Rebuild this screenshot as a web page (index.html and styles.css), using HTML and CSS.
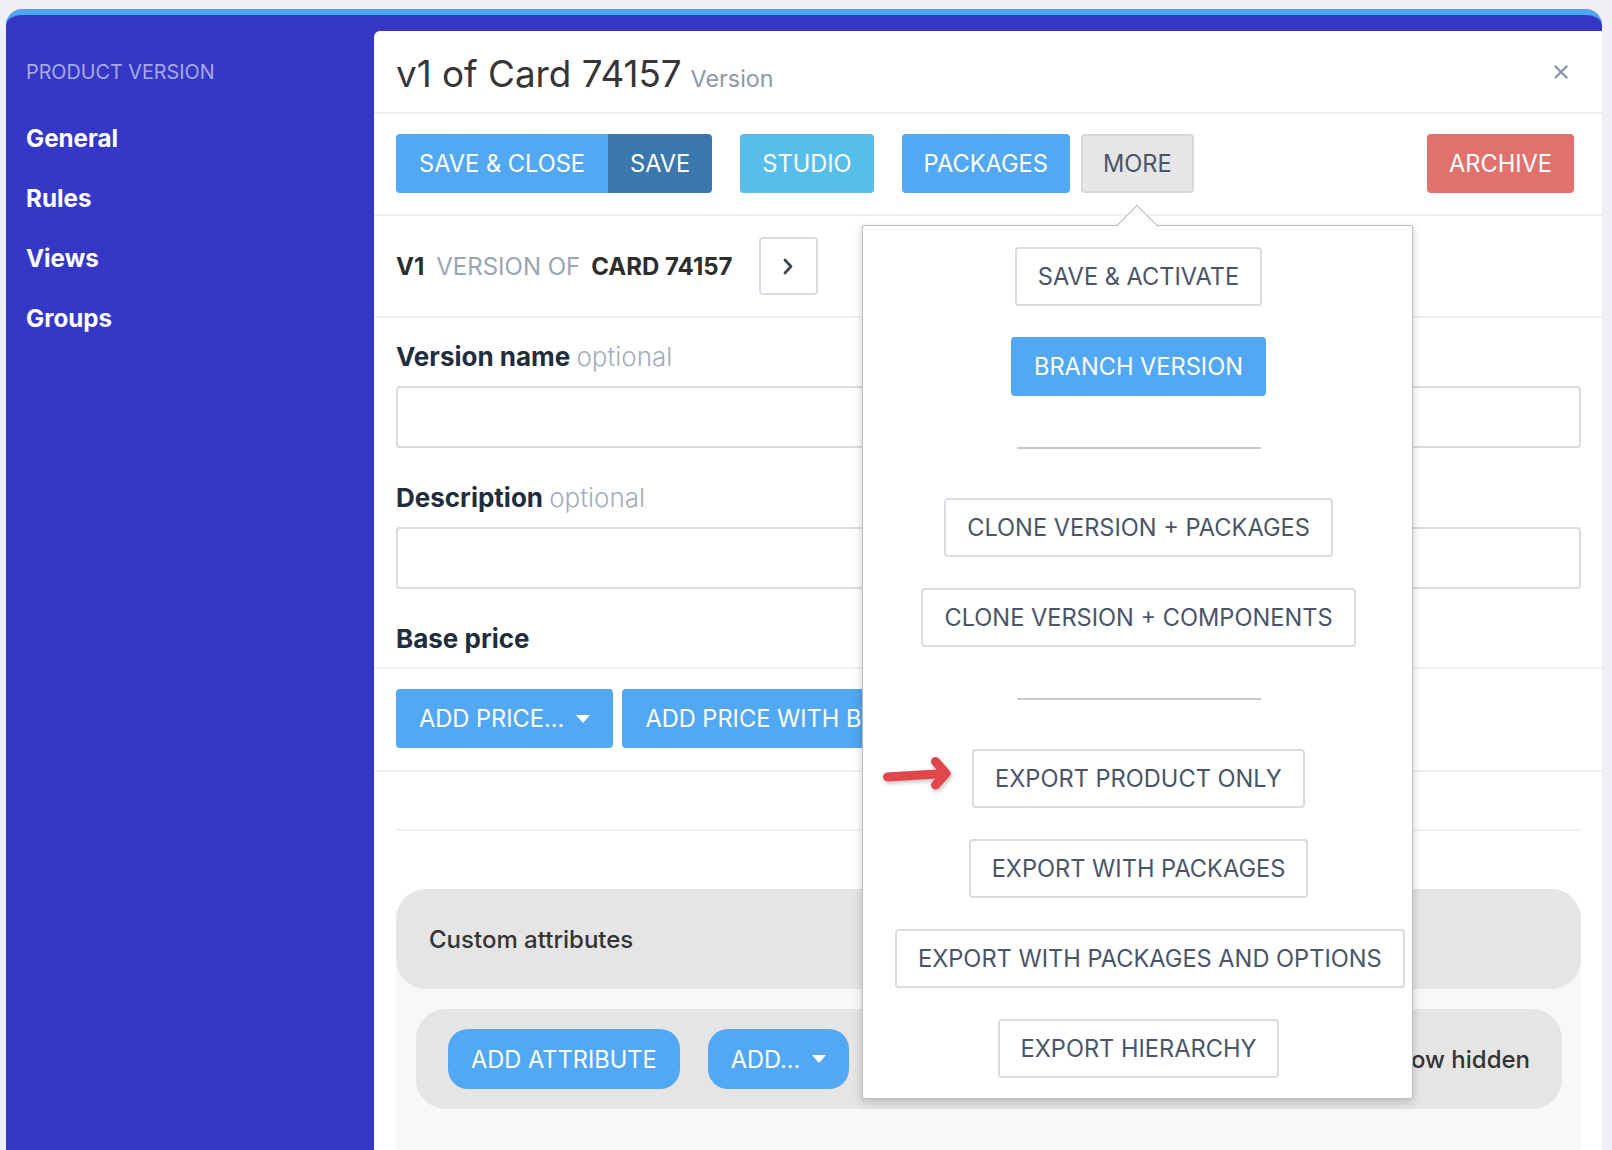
FILE: index.html
```html
<!DOCTYPE html>
<html lang="en">
<head>
    <meta charset="UTF-8">
    <meta name="viewport" content="width=device-width, initial-scale=1.0">
    <title>v1 of Card 74157 - Product version</title>
    <link rel="stylesheet" href="styles.css">
</head>
<body>

<div class="frame">
    <aside class="sidebar">
        <div class="sidebar-title">PRODUCT VERSION</div>
        <nav class="side-nav">
            <a href="#">General</a>
            <a href="#">Rules</a>
            <a href="#">Views</a>
            <a href="#">Groups</a>
        </nav>
    </aside>

    <main class="card">
        <header class="card-head">
            <h1>v1 of Card 74157<small>Version</small></h1>
            <button class="close" type="button" aria-label="Close">
                <svg width="14" height="14" viewBox="0 0 14 14"><path d="M1.5 1.5L12.5 12.5M12.5 1.5L1.5 12.5" stroke="#8b95a5" stroke-width="2.4" stroke-linecap="round"/></svg>
            </button>
        </header>

        <div class="toolbar">
            <div class="btn-group">
                <button class="btn btn-blue" type="button">SAVE &amp; CLOSE</button>
                <button class="btn btn-dark" type="button">SAVE</button>
            </div>
            <button class="btn btn-cyan" type="button">STUDIO</button>
            <button class="btn btn-blue" type="button">PACKAGES</button>
            <button class="btn btn-grey more" type="button">MORE</button>
            <button class="btn btn-red archive" type="button">ARCHIVE</button>
        </div>

        <div class="version-row">
            <b>V1</b>
            <span class="muted">VERSION OF</span>
            <b>CARD 74157</b>
            <button class="chevron" type="button" aria-label="Next">
                <svg width="12" height="19" viewBox="0 0 12 19"><path d="M3 3L9 9.5L3 16" fill="none" stroke="#3d4a5c" stroke-width="2.8" stroke-linecap="round" stroke-linejoin="round"/></svg>
            </button>
        </div>

        <div class="form">
            <label class="field-label" for="vname">Version name <span>optional</span></label>
            <input class="field-input" type="text" id="vname">

            <label class="field-label" for="vdesc">Description <span>optional</span></label>
            <input class="field-input" type="text" id="vdesc">

            <div class="field-label last">Base price</div>
        </div>

        <div class="price-row">
            <button class="btn btn-blue" type="button">ADD PRICE... <i class="caret"></i></button>
            <button class="btn btn-blue" type="button">ADD PRICE WITH BREAKS</button>
        </div>

        <div class="attrs-wrap">
            <hr>
            <div class="attrs">
                <div class="attrs-head">Custom attributes</div>
                <div class="attrs-bar">
                    <button class="btn btn-blue pill" type="button">ADD ATTRIBUTE</button>
                    <button class="btn btn-blue pill" type="button">ADD... <i class="caret"></i></button>
                    <span class="show-hidden">Show hidden</span>
                </div>
            </div>
        </div>

        <!-- menu of the MORE button -->
        <div class="popover">
            <div class="pop-row"><button class="btn btn-outline" type="button">SAVE &amp; ACTIVATE</button></div>
            <div class="pop-row"><button class="btn btn-blue" type="button">BRANCH VERSION</button></div>
            <div class="pop-divider"></div>
            <div class="pop-row"><button class="btn btn-outline" type="button">CLONE VERSION + PACKAGES</button></div>
            <div class="pop-row"><button class="btn btn-outline" type="button">CLONE VERSION + COMPONENTS</button></div>
            <div class="pop-divider"></div>
            <div class="pop-row"><button class="btn btn-outline" type="button">EXPORT PRODUCT ONLY</button></div>
            <div class="pop-row"><button class="btn btn-outline" type="button">EXPORT WITH PACKAGES</button></div>
            <div class="pop-row"><button class="btn btn-outline" type="button">EXPORT WITH PACKAGES AND OPTIONS</button></div>
            <div class="pop-row"><button class="btn btn-outline" type="button">EXPORT HIERARCHY</button></div>

            <svg class="pointer" width="85" height="50" viewBox="0 0 85 50">
                <path d="M12.5 27L70 23.5M60.5 11.5L71 23.5L60.5 35" fill="none" stroke="#e0464b" stroke-width="9" stroke-linecap="round" stroke-linejoin="round"/>
            </svg>
        </div>
    </main>
</div>

</body>
</html>
```

FILE: styles.css
```css
* {
    box-sizing: border-box;
}
html, body {
    height: 100%;
}
body {
    margin: 0;
    padding: 9px 10px 0 6px;
    background-color: #eef0f5;
    font-family: Inter, "Noto Sans", sans-serif;
    overflow: hidden;
}
.frame {
    display: flex;
    height: 100%;
    background-color: #3538c6;
    border-top: 6px solid #4fa5f0;
    border-radius: 16px 16px 0 0;
}

/* sidebar */
.sidebar {
    width: 368px;
    flex: none;
    padding: 45px 20px 0;
}
.sidebar-title {
    font-size: 19.8px;
    line-height: 24px;
    color: #a7aae4;
}
.side-nav {
    margin-top: 25px;
}
.side-nav a {
    display: block;
    color: #fff;
    font-size: 24.2px;
    font-weight: 700;
    line-height: 60px;
    text-decoration: none;
}

/* main card */
.card {
    flex: 1;
    position: relative;
    margin-top: 16px;
    background-color: #fff;
    border-radius: 6px 0 0 0;
    overflow: hidden;
}
.card-head {
    display: flex;
    align-items: flex-start;
    justify-content: space-between;
    height: 83px;
    padding: 21px 22px 0;
    border-bottom: 2px solid #eff0f2;
}
.card-head h1 {
    margin: 0;
    font-size: 36.8px;
    font-weight: 400;
    line-height: 44px;
    color: #363636;
}
.card-head h1 small {
    margin-left: 9px;
    font-size: 23.3px;
    color: #8d98a8;
}
.close {
    margin: 13px 12px 0 0;
    padding: 0;
    border: none;
    background: none;
    line-height: 0;
    cursor: pointer;
}

/* buttons */
.btn {
    display: inline-flex;
    align-items: center;
    height: 59px;
    padding: 0 22px;
    font-family: inherit;
    font-size: 23.6px;
    color: #fff;
    white-space: nowrap;
    border: 1px solid transparent;
    border-radius: 4px;
    cursor: pointer;
}
.btn-blue { background-color: #52a8f2; }
.btn-dark { background-color: #3977ad; }
.btn-cyan { background-color: #57bde9; }
.btn-red { background-color: #e0716c; }
.btn-grey {
    background-color: #e6e6e6;
    border: 2px solid #d5d9df;
    color: #4a5568;
    padding: 0 21px;
}
.btn-outline {
    background-color: #fff;
    border: 2px solid #d9dde3;
    color: #4a5568;
    padding: 0 21px;
}
.btn-group {
    display: flex;
}
.btn-group .btn:first-child {
    border-radius: 4px 0 0 4px;
}
.btn-group .btn:last-child {
    border-radius: 0 4px 4px 0;
}
.caret {
    width: 0;
    height: 0;
    margin-left: 12px;
    border-left: 7.5px solid transparent;
    border-right: 7.5px solid transparent;
    border-top: 8px solid #fff;
}

.toolbar {
    display: flex;
    align-items: center;
    gap: 28px;
    padding: 20px 28px 21px 22px;
    border-bottom: 2px solid #eff0f2;
}
.toolbar .btn {
    padding: 0 21px;
}
.toolbar .btn-group .btn:first-child {
    padding: 0 22px;
}
.toolbar .btn-grey {
    padding: 0 20px;
}
.toolbar .more {
    margin-left: -17px;
}
.toolbar .archive {
    margin-left: auto;
}

/* version line */
.version-row {
    display: flex;
    align-items: center;
    padding: 21px 22px;
    border-bottom: 2px solid #eff0f2;
    font-size: 24px;
    color: #2d2d2d;
}
.version-row .muted {
    margin: 0 11px 0 12px;
    color: #9aa5b4;
}
.chevron {
    display: flex;
    align-items: center;
    justify-content: center;
    width: 59px;
    height: 58px;
    margin-left: 26px;
    padding: 0;
    background: #fff;
    border: 2px solid #d7dce3;
    border-radius: 4px;
}

/* form */
.form {
    padding: 23px 21px 12px 22px;
    border-bottom: 2px solid #eff0f2;
}
.field-label {
    display: block;
    margin-bottom: 13px;
    font-size: 26px;
    font-weight: 700;
    line-height: 32px;
    color: #1f2d3d;
}
.field-label span {
    font-weight: 300;
    color: #a3adbb;
}
.field-label.last {
    margin-bottom: 0;
}
.field-input {
    display: block;
    width: 100%;
    height: 62px;
    margin: 0 0 34px;
    border: 2px solid #d8dde3;
    border-radius: 4px;
    font: inherit;
}

.price-row {
    display: flex;
    gap: 9px;
    padding: 20px 22px 22px;
    border-bottom: 2px solid #eff0f2;
}

/* custom attributes */
.attrs-wrap {
    padding: 57px 21px 0 22px;
}
.attrs-wrap hr {
    height: 2px;
    margin: 0 0 58px;
    border: none;
    background-color: #f0f1f3;
}
.attrs {
    height: 320px;
    background-color: #f8f8f8;
    border-radius: 30px 30px 0 0;
}
.attrs-head {
    display: flex;
    align-items: center;
    height: 100px;
    padding: 0 33px;
    background-color: #e5e5e5;
    border-radius: 30px;
    font-size: 24px;
    font-weight: 500;
    color: #333;
}
.attrs-bar {
    display: flex;
    align-items: center;
    gap: 28px;
    height: 100px;
    margin: 20px 19px 0 20px;
    padding: 0 32px;
    background-color: #e5e5e5;
    border-radius: 30px;
}
.btn.pill {
    height: 60px;
    border-radius: 20px;
}
.show-hidden {
    margin-left: auto;
    font-size: 24px;
    font-weight: 500;
    color: #333;
}

/* MORE dropdown */
.popover {
    position: absolute;
    left: 488px;
    top: 194px;
    width: 551px;
    padding: 21px 30px 20px 32px;
    background-color: #fff;
    border: 1px solid #bdbdbd;
    border-radius: 2px;
    box-shadow: 0 3px 10px rgba(0, 0, 0, 0.2);
}
.popover::before {
    content: "";
    position: absolute;
    left: 259px;
    top: -15px;
    width: 29px;
    height: 29px;
    background-color: #fff;
    border-top: 1px solid #bdbdbd;
    border-left: 1px solid #bdbdbd;
    transform: rotate(45deg);
}
.pop-row {
    height: 59px;
    margin-bottom: 31px;
    text-align: center;
    white-space: nowrap;
}
.pop-row:last-of-type {
    margin-bottom: 0;
}
.pop-row .btn {
    vertical-align: top;
}
.pop-divider {
    width: 244px;
    height: 2px;
    margin: 51px auto 49px;
    background-color: #c8c8c8;
}
.pointer {
    position: absolute;
    left: 12px;
    top: 524px;
    filter: drop-shadow(1px 2px 2px rgba(0, 0, 0, 0.25));
}
```
